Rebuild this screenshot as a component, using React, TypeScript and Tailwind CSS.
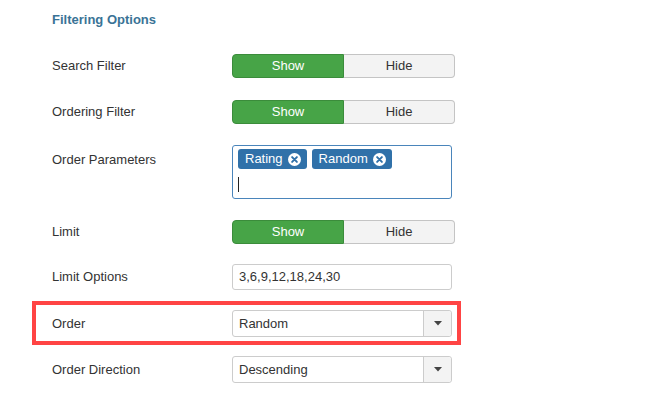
import { useState } from 'react'

const FONT = { fontFamily: '"Liberation Sans", Arial, sans-serif' }

function Toggle() {
  const [on, setOn] = useState(true)
  return (
    <div className="flex w-[223px] h-[24px] text-[13px]">
      <button
        onClick={() => setOn(true)}
        className={`flex-1 rounded-l-[4px] border ${on ? 'bg-[#47a447] border-[#3b8c3b] text-white' : 'bg-[#f3f3f3] border-[#c4c4c4] text-[#333]'}`}
      >
        Show
      </button>
      <button
        onClick={() => setOn(false)}
        className={`flex-1 rounded-r-[4px] border border-l-0 ${!on ? 'bg-[#47a447] border-[#3b8c3b] text-white' : 'bg-[#f3f3f3] border-[#c4c4c4] text-[#333]'}`}
      >
        Hide
      </button>
    </div>
  )
}

function Tag({ label }: { label: string }) {
  return (
    <span className="flex items-center gap-[5px] h-[20px] pl-[7px] pr-[6px] rounded-[3px] bg-[#3071a9] text-white text-[13px]">
      {label}
      <svg width="13" height="13" viewBox="0 0 12 12">
        <circle cx="6" cy="6" r="6" fill="#fff" />
        <path d="M3.8 3.8 L8.2 8.2 M8.2 3.8 L3.8 8.2" stroke="#3071a9" strokeWidth="1.8" strokeLinecap="round" />
      </svg>
    </span>
  )
}

function Select({ value }: { value: string }) {
  return (
    <div className="flex w-[220px] h-[27px] border border-[#ccc] rounded-[3px] bg-white text-[13px] text-[#333]">
      <div className="flex-1 flex items-center pl-[6px]">{value}</div>
      <div className="w-[28px] flex items-center justify-center bg-[#f3f3f3] border-l border-[#ccc] rounded-r-[3px]">
        <svg width="8" height="5" viewBox="0 0 8 5">
          <path d="M0 0 H8 L4 4.5 Z" fill="#444" />
        </svg>
      </div>
    </div>
  )
}

function Label({ children }: { children: string }) {
  return <div className="w-[180px] shrink-0 text-[13px] text-[#333]">{children}</div>
}

export default function App() {
  return (
    <div className="w-[665px] h-[395px] bg-white pl-[52px] flex flex-col" style={FONT}>
      <h2 className="mt-[12px] text-[13px] leading-[16px] font-bold text-[#3a7396]">Filtering Options</h2>

      <div className="mt-[26px] flex items-center">
        <Label>Search Filter</Label>
        <Toggle />
      </div>

      <div className="mt-[22px] flex items-center">
        <Label>Ordering Filter</Label>
        <Toggle />
      </div>

      <div className="mt-[21px] flex items-start">
        <div className="pt-[5px]">
          <Label>Order Parameters</Label>
        </div>
        <div className="w-[220px] h-[54px] border border-[#4a85bb] rounded-[3px] px-[5px] pt-[3px]">
          <div className="flex gap-[5px]">
            <Tag label="Rating" />
            <Tag label="Random" />
          </div>
          <div className="mt-[8px] w-px h-[15px] bg-[#222]" />
        </div>
      </div>

      <div className="mt-[21px] flex items-center">
        <Label>Limit</Label>
        <Toggle />
      </div>

      <div className="mt-[20px] flex items-center">
        <Label>Limit Options</Label>
        <div className="w-[220px] h-[26px] border border-[#ccc] rounded-[3px] flex items-center pl-[6px] text-[13px] text-[#333]">
          3,6,9,12,18,24,30
        </div>
      </div>

      <div className="mt-[11px] -ml-[20px] w-[429px] border-[4px] border-[#ff4444] pl-[16px] pt-[5px] pb-[4px] flex items-center">
        <Label>Order</Label>
        <Select value="Random" />
      </div>

      <div className="mt-[11px] flex items-center">
        <Label>Order Direction</Label>
        <Select value="Descending" />
      </div>
    </div>
  )
}
